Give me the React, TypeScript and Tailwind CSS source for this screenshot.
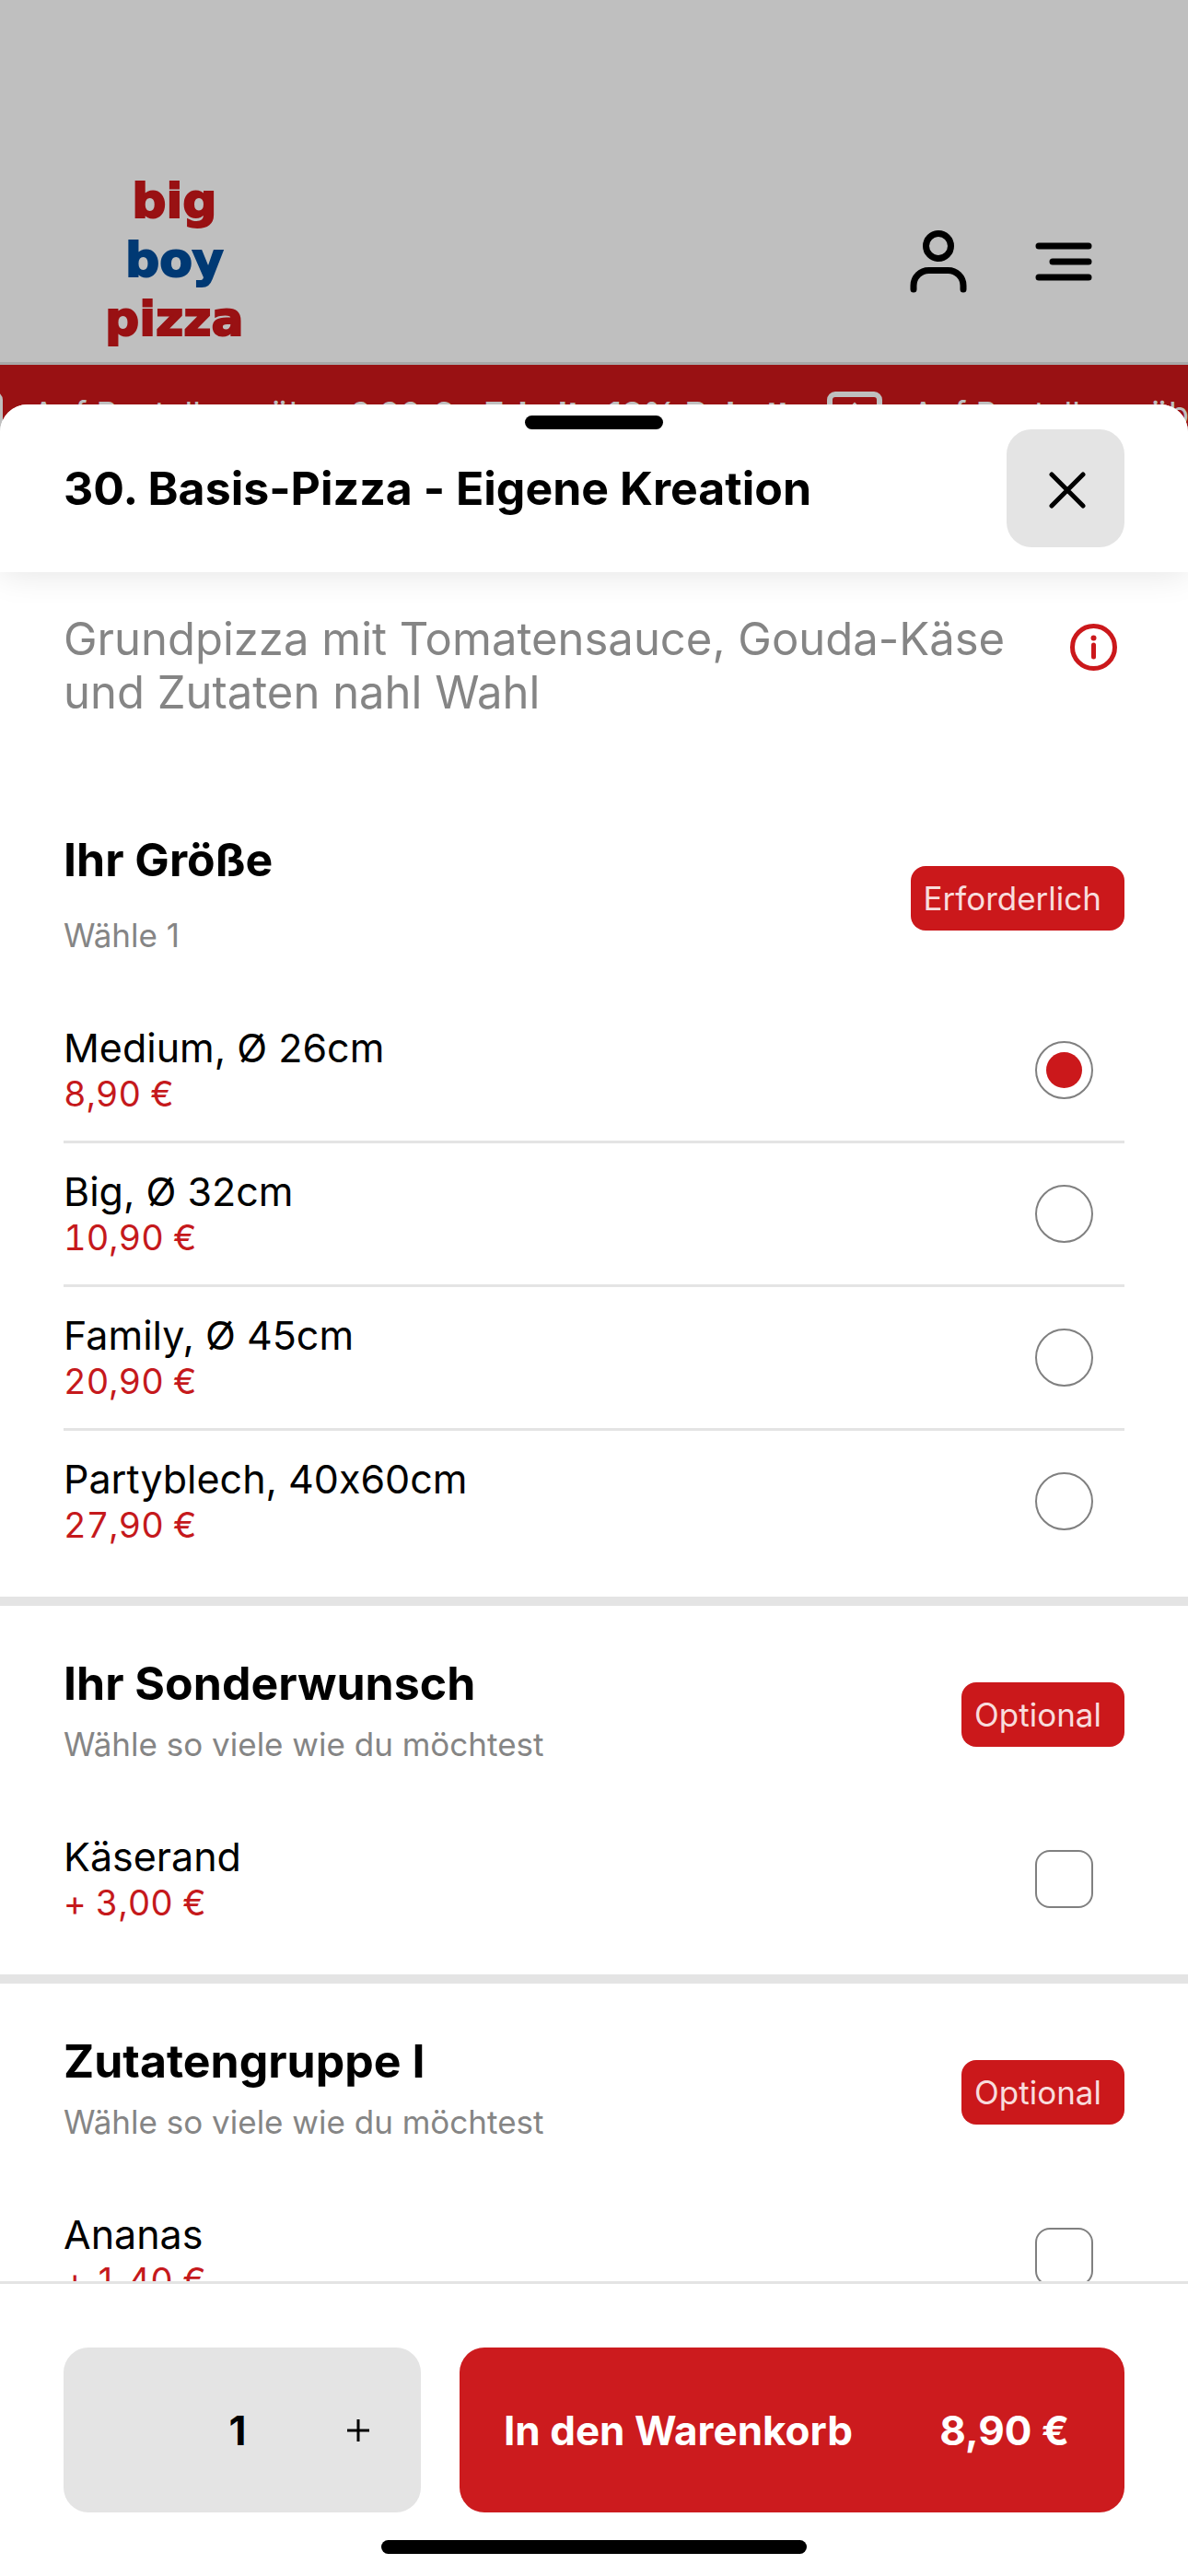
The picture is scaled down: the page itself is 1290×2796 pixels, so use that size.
import React, { useState } from 'react';

interface Option {
  id: string;
  name: string;
  price: string;
}

const sizes: Option[] = [
  { id: 'medium', name: 'Medium, Ø 26cm', price: '8,90 €' },
  { id: 'big', name: 'Big, Ø 32cm', price: '10,90 €' },
  { id: 'family', name: 'Family, Ø 45cm', price: '20,90 €' },
  { id: 'party', name: 'Partyblech, 40x60cm', price: '27,90 €' },
];

const extras: Option[] = [{ id: 'kaeserand', name: 'Käserand', price: '+ 3,00 €' }];

const toppings: Option[] = [{ id: 'ananas', name: 'Ananas', price: '+ 1,40 €' }];

function UserIcon() {
  return (
    <svg width="62" height="70" viewBox="0 0 62 70" fill="none" stroke="currentColor" strokeWidth="7" strokeLinecap="round">
      <circle cx="31" cy="18" r="13.5" />
      <path d="M4 65v-4a16.500 16.500 0 0 1 16.500-16.500h21A16.500 16.500 0 0 1 58 61v4" />
    </svg>
  );
}

function MenuIcon() {
  return (
    <svg width="62" height="42" viewBox="0 0 62 42" fill="none" stroke="currentColor" strokeWidth="7" strokeLinecap="round">
      <path d="M4 4h54M19 21h39M4 38h54" />
    </svg>
  );
}

function InfoIcon() {
  return (
    <svg width="51" height="51" viewBox="0 0 51 51" fill="none">
      <circle cx="25.500" cy="25.500" r="23" stroke="currentColor" strokeWidth="5" />
      <circle cx="25.500" cy="15.500" r="3" fill="currentColor" />
      <path d="M25.500 23v13" stroke="currentColor" strokeWidth="5" strokeLinecap="round" />
    </svg>
  );
}

function TickerIcon() {
  return (
    <svg className="shrink-0" width="60" height="60" viewBox="0 0 60 60" fill="none" stroke="currentColor" strokeLinecap="round">
      <rect x="3" y="3" width="54" height="54" rx="6" strokeWidth="6" />
      <path d="M30 15v30M18 27l12-12 12 12" strokeWidth="5" />
    </svg>
  );
}

function TickerItem() {
  return (
    <div className="flex shrink-0 items-start">
      <TickerIcon />
      <p className="w-[895px] pl-8 text-[36px] leading-[48px] whitespace-nowrap">
        Auf Bestellung über 9,90 € <strong className="ml-6 font-bold">Erhalte 10% Rabatt</strong>
      </p>
    </div>
  );
}

interface OptionRowProps {
  option: Option;
  type: 'radio' | 'checkbox';
  group: string;
  checked: boolean;
  onChange: () => void;
}

function OptionRow({ option, type, group, checked, onChange }: OptionRowProps) {
  const shape =
    type === 'radio'
      ? 'rounded-full before:rounded-full before:size-[39px]'
      : 'rounded-2xl before:rounded-lg before:size-[35px]';

  return (
    <li className="border-b-3 border-[#e4e4e4] last:border-b-0">
      <label className="flex min-h-[153px] items-center justify-between pr-[34px]">
        <span className="flex flex-col pb-1">
          <span className="text-[43px] leading-[54px] text-black">{option.name}</span>
          <span className="text-[38px] leading-[46px] text-[#c5191c] tabular-nums">{option.price}</span>
        </span>
        <input
          type={type}
          name={group}
          checked={checked}
          onChange={onChange}
          className={`grid size-[63px] shrink-0 appearance-none place-content-center border-2 border-[#808080] bg-white checked:before:bg-[#cb181b] ${shape}`}
        />
      </label>
    </li>
  );
}

interface SectionProps {
  title: string;
  hint: string;
  badge: string;
  gap?: string;
  children: React.ReactNode;
}

function Section({ title, hint, badge, gap = 'gap-2', children }: SectionProps) {
  return (
    <section className="border-b-10 border-[#e4e4e4] px-[69px] pt-14 pb-[27px]">
      <div className="flex items-center justify-between pb-10">
        <div className={`flex flex-col ${gap}`}>
          <h2 className="text-[50px] leading-[56px] font-bold text-black">{title}</h2>
          <p className="text-[35px] leading-[60px] text-[#858585]">{hint}</p>
        </div>
        <span className="rounded-2xl bg-[#cb181b] pr-[25px] pl-3.5 text-[35px] leading-[70px] text-[#f8dcdc]">{badge}</span>
      </div>
      <ul>{children}</ul>
    </section>
  );
}

export default function App() {
  const [size, setSize] = useState('medium');
  const [selected, setSelected] = useState<string[]>([]);
  const [quantity, setQuantity] = useState(1);

  const toggle = (id: string) => {
    setSelected((prev) => (prev.includes(id) ? prev.filter((x) => x !== id) : [...prev, id]));
  };

  const price = sizes.find((s) => s.id === size)?.price;

  return (
    <div className="relative h-screen overflow-hidden bg-white font-['Inter','Liberation_Sans',sans-serif] text-black [font-feature-settings:'calt'_0]">
      {/* Page behind the sheet */}
      <header className="flex items-end justify-between border-b-3 border-[#e0e0e0] pt-[186px] pr-[104px] pb-[15px] pl-[114px]">
        <a
          href="#"
          className="flex flex-col items-center font-['DejaVu_Sans',sans-serif] text-[52px] leading-[64px] font-bold text-[#cc171a] [-webkit-text-stroke:2px]"
        >
          <span>big</span>
          <span className="text-[#004d9b]">boy</span>
          <span>pizza</span>
        </a>
        <div className="flex items-center gap-[74px] pb-[59px]">
          <button type="button" aria-label="Konto">
            <UserIcon />
          </button>
          <button type="button" aria-label="Menü">
            <MenuIcon />
          </button>
        </div>
      </header>
      <div className="flex h-[120px] overflow-hidden bg-[#cc171a] pt-[29px] text-white">
        <div className="-ml-[57px] flex">
          <TickerItem />
          <TickerItem />
        </div>
      </div>
      <div className="absolute inset-0 bg-black/25" />

      {/* Bottom sheet */}
      <div
        role="dialog"
        aria-labelledby="sheet-title"
        className="absolute inset-x-0 top-[439px] bottom-0 flex flex-col overflow-hidden rounded-t-[30px] bg-white"
      >
        <div className="relative z-10 bg-white px-[69px] pt-3 pb-[27px] shadow-[0_0_36px_rgba(0,0,0,0.12)]">
          <div className="mx-auto h-[15px] w-[150px] rounded-lg bg-black" />
          <div className="flex items-center justify-between">
            <h1 id="sheet-title" className="text-[50px] leading-[60px] font-bold">
              30. Basis-Pizza - Eigene Kreation
            </h1>
            <button
              type="button"
              aria-label="Schließen"
              className="flex size-[128px] items-center justify-center rounded-[27px] bg-[#e4e4e4] pt-1 pl-1"
            >
              <svg width="40" height="40" viewBox="0 0 40 40" fill="none" stroke="currentColor" strokeWidth="5" strokeLinecap="round">
                <path d="M3 3l34 34M37 3L3 37" />
              </svg>
            </button>
          </div>
        </div>

        <main className="min-h-0 flex-1 overflow-hidden">
          <div className="flex justify-between px-[69px] pt-11 pb-[68px]">
            <p className="max-w-[1040px] text-[49px] leading-[58px] text-[#858585]">
              Grundpizza mit Tomatensauce, Gouda-Käse und Zutaten nahl Wahl
            </p>
            <button type="button" aria-label="Info" className="mt-3 mr-2 self-start text-[#cb181b]">
              <InfoIcon />
            </button>
          </div>

          <Section title="Ihr Größe" hint="Wähle 1" badge="Erforderlich" gap="gap-6">
            {sizes.map((o) => (
              <OptionRow key={o.id} option={o} type="radio" group="size" checked={size === o.id} onChange={() => setSize(o.id)} />
            ))}
          </Section>

          <Section title="Ihr Sonderwunsch" hint="Wähle so viele wie du möchtest" badge="Optional">
            {extras.map((o) => (
              <OptionRow key={o.id} option={o} type="checkbox" group="extras" checked={selected.includes(o.id)} onChange={() => toggle(o.id)} />
            ))}
          </Section>

          <Section title="Zutatengruppe I" hint="Wähle so viele wie du möchtest" badge="Optional">
            {toppings.map((o) => (
              <OptionRow key={o.id} option={o} type="checkbox" group="toppings" checked={selected.includes(o.id)} onChange={() => toggle(o.id)} />
            ))}
          </Section>
        </main>

        <footer className="border-t-3 border-[#e4e4e4] bg-white px-[69px] pt-[69px] pb-6">
          <div className="flex h-[179px] gap-[42px]">
            <div className="flex w-[388px] items-stretch rounded-[27px] bg-[#e4e4e4]">
              <button
                type="button"
                aria-label="Weniger"
                disabled={quantity === 1}
                onClick={() => setQuantity(quantity - 1)}
                className="flex w-[126px] items-center justify-center disabled:opacity-0"
              >
                <svg width="24" height="24" viewBox="0 0 24 24" stroke="currentColor" strokeWidth="3">
                  <path d="M0 12h24" />
                </svg>
              </button>
              <input
                aria-label="Anzahl"
                value={quantity}
                readOnly
                className="min-w-0 flex-1 bg-transparent text-center text-[44px] font-bold"
              />
              <button
                type="button"
                aria-label="Mehr"
                onClick={() => setQuantity(quantity + 1)}
                className="flex w-[136px] items-center justify-center"
              >
                <svg width="24" height="24" viewBox="0 0 24 24" stroke="currentColor" strokeWidth="3">
                  <path d="M0 12h24M12 0v24" />
                </svg>
              </button>
            </div>
            <button
              type="button"
              className="flex flex-1 items-center justify-between rounded-[27px] bg-[#cc1b1e] pr-[60px] pl-12 text-[44px] font-bold text-white"
            >
              <span>In den Warenkorb</span>
              <span>{price}</span>
            </button>
          </div>
          <div className="mx-auto mt-[30px] h-[15px] w-[462px] rounded-lg bg-black" />
        </footer>
      </div>
    </div>
  );
}
